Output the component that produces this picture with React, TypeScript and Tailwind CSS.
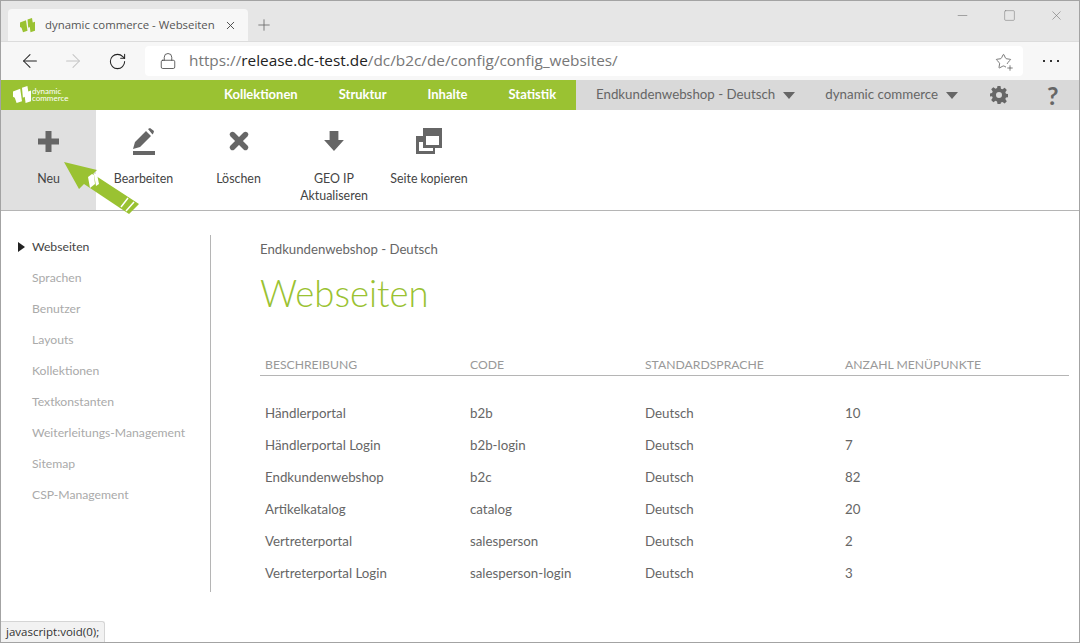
import { ArrowLeft, ArrowRight, Lock, Minus, Plus, RotateCw, Square, Star, X } from 'lucide-react';

const sideItems = [
  'Sprachen',
  'Benutzer',
  'Layouts',
  'Kollektionen',
  'Textkonstanten',
  'Weiterleitungs-Management',
  'Sitemap',
  'CSP-Management',
];

const rows = [
  ['Händlerportal', 'b2b', 'Deutsch', '10'],
  ['Händlerportal Login', 'b2b-login', 'Deutsch', '7'],
  ['Endkundenwebshop', 'b2c', 'Deutsch', '82'],
  ['Artikelkatalog', 'catalog', 'Deutsch', '20'],
  ['Vertreterportal', 'salesperson', 'Deutsch', '2'],
  ['Vertreterportal Login', 'salesperson-login', 'Deutsch', '3'],
];

function Caret() {
  return <span className="ml-2 h-0 w-0 border-x-[6.5px] border-t-[7px] border-x-transparent border-t-[#666]" />;
}

function DcLogo({ fill, className }: { fill: string; className: string }) {
  return (
    <svg viewBox="0 0 20 20" className={className}>
      <path fill={fill} d="M0 6l8-3 2 14-6 2-2-6-2-1zM10 2l6-2 1 6 3-1 0 12-6 2-1-7-2 1z" />
    </svg>
  );
}

function ToolButton({ icon, label, width }: { icon: React.ReactNode; label: React.ReactNode; width: string }) {
  return (
    <div className={`flex flex-col items-center ${width}`}>
      <div className="flex h-[60px] items-center justify-center pt-[2px]">{icon}</div>
      <div className="text-center text-[12.4px] leading-[17px] text-[#444]">{label}</div>
    </div>
  );
}

export default function App() {
  return (
    <div className="relative h-[643px] w-[1080px] overflow-hidden border border-[#a3a3a3] bg-white font-['Lato',sans-serif]">
      {/* browser tab strip */}
      <div className="flex h-[40px] items-end bg-[#e6e6e6] pl-[7px] font-['Open_Sans',sans-serif]">
        <div className="flex h-[32px] w-[240px] items-center rounded-t-[4px] bg-[#f7f7f7] pl-[12px]">
          <DcLogo fill="#9ac232" className="h-[15px] w-[15px]" />
          <span className="ml-[10px] whitespace-nowrap text-[11.4px] text-[#555]">dynamic commerce - Webseiten</span>
          <X className="ml-[9px] h-[13px] w-[13px] text-[#444]" strokeWidth={1.7} />
        </div>
        <Plus className="mb-[7px] ml-[7px] h-[18px] w-[18px] text-[#666]" strokeWidth={1.1} />
        <div className="mb-[18px] ml-auto flex items-center gap-[33px] pr-[15px] text-[#777]">
          <Minus className="h-[15px] w-[15px]" strokeWidth={1} />
          <Square className="h-[13px] w-[13px]" strokeWidth={1} />
          <X className="h-[15px] w-[15px]" strokeWidth={1} />
        </div>
      </div>

      {/* browser toolbar */}
      <div className="flex h-[39px] items-center border-t border-[#dcdcdc] bg-[#f7f7f7] pl-[18px] font-['Open_Sans',sans-serif]">
        <ArrowLeft className="h-[22px] w-[22px] text-[#222]" strokeWidth={1.1} />
        <ArrowRight className="ml-[21px] h-[22px] w-[22px] text-[#c4c4c4]" strokeWidth={1.1} />
        <RotateCw className="ml-[24px] h-[19px] w-[19px] text-[#222]" strokeWidth={1.3} />
        <div className="ml-[18px] flex h-[30px] w-[878px] items-center rounded-[4px] bg-white pl-[14px]">
          <Lock className="h-[18px] w-[18px] text-[#444]" strokeWidth={1.1} />
          <span className="ml-[12px] text-[15.35px] text-[#777]">
            https://<span className="text-[#222]">release.dc-test.de</span>/dc/b2c/de/config/config_websites/
          </span>
          <div className="relative ml-auto mr-[11px]">
            <Star className="h-[17px] w-[17px] text-[#555]" strokeWidth={1.1} />
            <Plus className="absolute -bottom-[2px] -right-[2px] h-[8px] w-[8px] bg-white text-[#444]" strokeWidth={2} />
          </div>
        </div>
        <div className="ml-[20px] flex gap-[5px]">
          <span className="h-[2px] w-[2px] bg-[#333]" />
          <span className="h-[2px] w-[2px] bg-[#333]" />
          <span className="h-[2px] w-[2px] bg-[#333]" />
        </div>
      </div>

      {/* app nav */}
      <div className="flex h-[30px] items-center">
        <div className="flex h-full w-[575px] items-center bg-[#9ac232] pl-[12px] text-white">
          <DcLogo fill="#fff" className="h-[18px] w-[18px]" />
          <div className="ml-[1px] w-[40px] text-[8px] leading-[7.5px]">dynamic commerce</div>
          <nav className="ml-[152px] flex gap-[41px] text-[13px] font-bold">
            <span>Kollektionen</span>
            <span>Struktur</span>
            <span>Inhalte</span>
            <span>Statistik</span>
          </nav>
        </div>
        <div className="flex h-full flex-1 items-center bg-[#d9d9d9] pl-[20px] text-[13.3px] text-[#666]">
          <span>Endkundenwebshop - Deutsch</span>
          <Caret />
          <span className="ml-[30px]">dynamic commerce</span>
          <Caret />
          <svg viewBox="0 0 24 24" className="ml-[32px] h-[18px] w-[18px]">
            <path
              fill="#666"
              fillRule="evenodd"
              d="M10 0h4l.6 3.500 2 .9 3-2 2.800 2.800-2 3 .9 2 3.500.6v4l-3.500.6-.9 2 2 3-2.800 2.800-3-2-2 .9L14 24h-4l-.6-3.500-2-.9-3 2L1.600 18.800l2-3-.9-2L0 14v-4l2.700-.6.9-2-2-3L4.400 1.600l3 2 2-.9zM12 8a4 4 0 1 0 0 8 4 4 0 0 0 0-8z"
            />
          </svg>
          <span className="ml-[39px] text-[25px] font-bold leading-none">?</span>
        </div>
      </div>

      {/* action bar */}
      <div className="flex h-[101px] border-b border-[#b5b5b5]">
        <ToolButton
          width="w-[95px] bg-[#e0e0e0]"
          label="Neu"
          icon={
            <svg viewBox="0 0 21 21" className="h-[21px] w-[21px]">
              <path fill="#666" d="M7.500 0h6v7.500H21v6h-7.500V21h-6v-7.500H0v-6h7.500z" />
            </svg>
          }
        />
        <ToolButton
          width="w-[95px]"
          label="Bearbeiten"
          icon={
            <svg viewBox="0 0 22 27" className="h-[27px] w-[22px]">
              <path fill="#666" d="M13 3l5 5L7 19l-7 2 2-7zM15 1l2-1 4 3-.5 2-1 1.500z" />
              <path fill="#666" d="M0 23h22v4H0z" />
            </svg>
          }
        />
        <ToolButton
          width="w-[95px]"
          label="Löschen"
          icon={<X className="h-[26px] w-[26px] text-[#666]" strokeWidth={5} />}
        />
        <ToolButton
          width="w-[96px]"
          label={
            <>
              GEO IP
              <br />
              Aktualiseren
            </>
          }
          icon={
            <svg viewBox="0 0 20 20" className="h-[22px] w-[22px]">
              <path fill="#666" d="M6 1h8v8h5l-9 10L1 9h5z" />
            </svg>
          }
        />
        <ToolButton
          width="w-[94px]"
          label="Seite kopieren"
          icon={
            <svg viewBox="0 0 26 26" className="h-[26px] w-[26px]">
              <path
                fill="#666"
                fillRule="evenodd"
                d="M7 0h19v20h-7v6H0V8h7zM10 8v9h13V8zM3 14v9h14v-3H7v-6z"
              />
            </svg>
          }
        />
      </div>

      {/* page body */}
      <div className="flex pt-[24px]">
        <aside className="h-[357px] w-[210px] border-r border-[#b5b5b5] pt-[1px]">
          <div className="relative flex h-[22px] items-center pl-[31px] text-[12.2px] text-[#444]">
            <span className="absolute left-[17px] h-0 w-0 border-y-[5px] border-l-[7px] border-y-transparent border-l-[#222]" />
            Webseiten
          </div>
          <ul className="mt-[9px] flex flex-col gap-[9px] pl-[31px] text-[12.2px] leading-[22px] text-[#aaa]">
            {sideItems.map((item) => (
              <li key={item}>{item}</li>
            ))}
          </ul>
        </aside>
        <main className="ml-[49px] flex-1 pr-[10px]">
          <div className="pt-[4px] text-[13.2px] leading-[20px] text-[#666]">Endkundenwebshop - Deutsch</div>
          <h1 className="mt-[9px] text-[36.5px] font-light leading-[50px] text-[#9ac232]">Webseiten</h1>
          <div className="mt-[36px] grid h-[22px] grid-cols-[205px_175px_200px_1fr] items-center border-b border-[#b5b5b5] pl-[5px] pt-[2px] text-[12.2px] text-[#999]">
            <span>BESCHREIBUNG</span>
            <span>CODE</span>
            <span>STANDARDSPRACHE</span>
            <span>ANZAHL MENÜPUNKTE</span>
          </div>
          <div className="mt-[22px] text-[13.3px] text-[#666]">
            {rows.map((row) => (
              <div key={row[1]} className="grid h-[32px] grid-cols-[205px_175px_200px_1fr] items-center pl-[5px]">
                {row.map((cell, i) => (
                  <span key={i}>{cell}</span>
                ))}
              </div>
            ))}
          </div>
        </main>
      </div>

      {/* pointer arrow over the toolbar */}
      <svg viewBox="0 0 80 60" className="absolute left-[63px] top-[159px] h-[60px] w-[80px]">
        <path fill="#9ac232" d="M0 2l33 8-4 4 46 30-10 10-45-30-5 5z" />
        <path fill="#fff" d="M24 17l4-3 2 1 1 9-5 4zM30 14l3 0 2 10-3 2z" />
        <path stroke="#fff" strokeWidth="1.500" fill="none" d="M64 38l-7 9M70 42l-8 9" />
      </svg>

      {/* status bubble */}
      <div className="absolute bottom-0 left-0 flex h-[21px] w-[104px] items-center rounded-tr-[3px] border-r border-t border-[#d5d5d5] bg-[#f2f2f2] pl-[5px] font-['Open_Sans',sans-serif] text-[11.5px] text-[#333]">
        javascript:void(0);
      </div>
    </div>
  );
}
